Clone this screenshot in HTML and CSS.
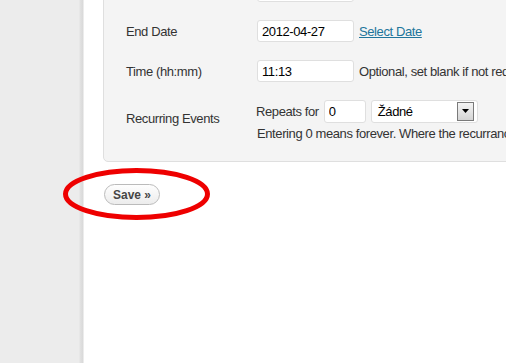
FILE: index.html
```html
<!DOCTYPE html>
<html>
<head>
<meta charset="utf-8">
<link rel="stylesheet" href="styles.css">
</head>
<body>
<div class="layout">
  <div class="sidebar"></div>
  <div class="main">
    <div class="panel">
      <div class="row">
        <div class="label">Start Date</div>
        <div class="field"><input class="text date" value="2012-04-27"><a class="link" href="#">Select Date</a></div>
      </div>
      <div class="row">
        <div class="label">End Date</div>
        <div class="field"><input class="text date" value="2012-04-27"><a class="link" href="#">Select Date</a></div>
      </div>
      <div class="row">
        <div class="label">Time (hh:mm)</div>
        <div class="field"><input class="text date" value="11:13"><span class="hint">Optional, set blank if not required</span></div>
      </div>
      <div class="row">
        <div class="label lift">Recurring Events</div>
        <div class="field col">
          <div class="line">
            <span class="rep">Repeats for</span>
            <input class="text num" value="0">
            <div class="select"><span>Žádné</span><span class="arrow"><svg width="9" height="5" viewBox="0 0 9 5"><path d="M1 0h7L4.5 4z" fill="#000"/></svg></span></div>
          </div>
          <div class="note">Entering 0 means forever. Where the recurrance is monthly, the event repeats on the same day.</div>
        </div>
      </div>
    </div>
    <div class="actions">
      <button class="save">Save »</button>
      <svg class="circle" width="160" height="60" viewBox="0 0 160 60"><ellipse cx="79.5" cy="27" rx="71" ry="23.5" fill="none" stroke="#ee0000" stroke-width="5"/></svg>
    </div>
  </div>
</div>
</body>
</html>
```
FILE: styles.css
```css
html, body {
  margin: 0;
  padding: 0;
  background: #fff;
  overflow: hidden;
  width: 506px;
  height: 363px;
}
body {
  font-family: "Liberation Sans", Arial, sans-serif;
  font-size: 13px;
  letter-spacing: -0.4px;
  color: #333;
}
.layout {
  display: flex;
  height: 363px;
}
.sidebar {
  width: 84px;
  flex: none;
  background: linear-gradient(to right, #ececec 0, #ececec 79px, #e2e2e2 80px, #d9d9d9 83px, #fff 84px);
}
.main {
  flex: none;
  width: 700px;
  padding-left: 19px;
}
.panel {
  margin-top: -41px;
  background: #f4f4f4;
  border: 1px solid #dfdfdf;
  border-radius: 0 0 0 5px;
  padding: 20px 0 19px 22px;
  display: grid;
  grid-template-columns: 131px auto;
  row-gap: 18px;
  align-items: center;
}
.row {
  display: contents;
}
.label {
  white-space: nowrap;
}
.label.lift {
  padding-bottom: 6px;
}
.field {
  display: flex;
  align-items: center;
  white-space: nowrap;
}
.field.col {
  flex-direction: column;
  align-items: flex-start;
}
.line {
  display: flex;
  align-items: center;
  height: 23px;
}
.text {
  box-sizing: border-box;
  height: 22px;
  border: 1px solid #dfdfdf;
  border-radius: 3px;
  background: #fff;
  font-family: "Liberation Sans", Arial, sans-serif;
  font-size: 13px;
  letter-spacing: -0.4px;
  color: #000;
  padding: 0 4px;
  margin: 0;
}
.date {
  width: 97px;
  margin-right: 5px;
}
.link {
  color: #21759b;
  text-decoration: underline;
}
.hint {
  color: #333;
}
.rep {
  margin-left: -1px;
  margin-right: 5px;
}
.num {
  width: 42px;
  height: 23px;
  margin-right: 5px;
}
.select {
  box-sizing: border-box;
  width: 107px;
  height: 23px;
  border: 1px solid #dfdfdf;
  border-radius: 3px;
  background: #fff;
  display: flex;
  align-items: center;
  justify-content: space-between;
  padding: 0 3px 0 6px;
  color: #000;
}
.arrow {
  box-sizing: border-box;
  width: 17px;
  height: 19px;
  border: 1px solid #7a7a7a;
  background: linear-gradient(#f4f4f4, #d4d4d4);
  display: flex;
  align-items: center;
  justify-content: center;
}
.note {
  margin-top: 2px;
  line-height: 17px;
}
.actions {
  position: relative;
  padding-top: 22px;
  padding-left: 1px;
}
.save {
  box-sizing: border-box;
  height: 21px;
  width: 56px;
  border: 1px solid #bbb;
  border-radius: 11px;
  background: linear-gradient(#fefefe, #ececec);
  font-family: "Liberation Sans", Arial, sans-serif;
  font-size: 12px;
  font-weight: bold;
  color: #464646;
  padding: 0;
  margin: 0;
}
.circle {
  position: absolute;
  left: -46px;
  top: 5px;
}
```
